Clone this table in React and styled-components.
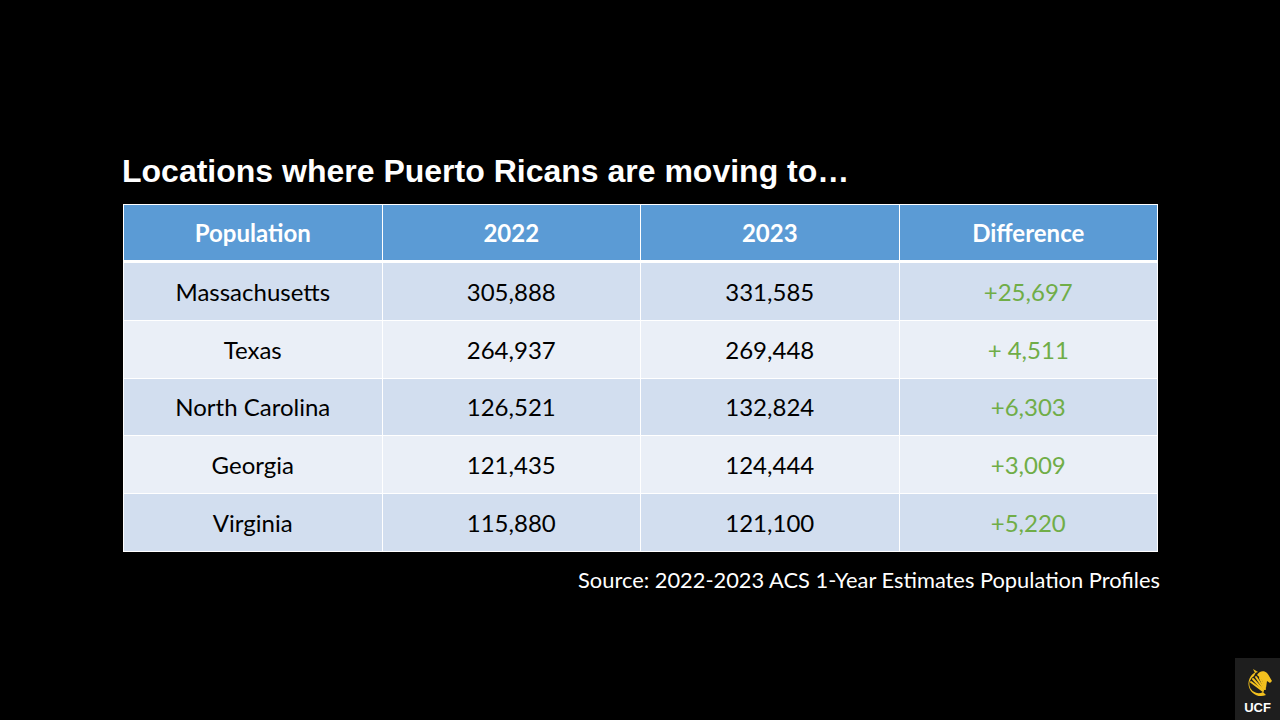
import React from 'react'
import styled, { createGlobalStyle } from 'styled-components'

const rows = [
  { name: 'Massachusetts', y22: '305,888', y23: '331,585', diff: '+25,697' },
  { name: 'Texas', y22: '264,937', y23: '269,448', diff: '+ 4,511' },
  { name: 'North Carolina', y22: '126,521', y23: '132,824', diff: '+6,303' },
  { name: 'Georgia', y22: '121,435', y23: '124,444', diff: '+3,009' },
  { name: 'Virginia', y22: '115,880', y23: '121,100', diff: '+5,220' },
]

const Global = createGlobalStyle`
  html, body {
    margin: 0;
    background: #000;
  }
`

const Pegasus = () => (
  <svg width="30" height="30" viewBox="0 0 30 30">
    <path d="M13 3 A12 12 0 1 0 23 26 L20 23 A8 8 0 1 1 11 7 Z" fill="#f2c01e" />
    <g stroke="#f2c01e" strokeWidth="2" strokeLinecap="round">
      <path d="M20 22 L8 13" />
      <path d="M20 21 L10 10" />
      <path d="M21 20 L13 8" />
      <path d="M22 20 L17 9" />
    </g>
    <path d="M14 6 C16 2 21 1 24 4 C26 6 27 9 29 12 L27 14 L24 12 L23 19 L20 18 C21 14 19 10 14 6 Z" fill="#f2c01e" />
    <path d="M12 4 L10 0 L15 3 Z" fill="#f2c01e" />
  </svg>
)

export default () => (
  <>
    <Global />
    <Slide>
      <Content>
        <Title>Locations where Puerto Ricans are moving to…</Title>
        <Table>
          <thead>
            <tr>
              <Th>Population</Th>
              <Th>2022</Th>
              <Th>2023</Th>
              <Th>Difference</Th>
            </tr>
          </thead>
          <tbody>
            { rows.map((r, i) => (
              <Row key={r.name} odd={i % 2 === 0}>
                <Td>{r.name}</Td>
                <Td>{r.y22}</Td>
                <Td>{r.y23}</Td>
                <Td green>{r.diff}</Td>
              </Row>
            ))}
          </tbody>
        </Table>
        <Source>Source: 2022-2023 ACS 1-Year Estimates Population Profiles</Source>
      </Content>
      <Logo>
        <Pegasus />
        <LogoText>UCF</LogoText>
      </Logo>
    </Slide>
  </>
)

const Slide = styled.div`
  position: relative;
  width: 1280px;
  height: 720px;
  background: #000;
  overflow: hidden;
`
const Content = styled.div`
  display: flex;
  flex-direction: column;
  padding: 152px 0 0 122px;
  width: 1038px;
`
const Title = styled.div`
  font-family: "Liberation Sans", Arial, sans-serif;
  font-weight: 700;
  font-size: 32px;
  color: #fff;
  line-height: 38px;
  margin-bottom: 14px;
`
const Table = styled.table`
  width: 1035px;
  margin-left: 1px;
  border-collapse: collapse;
  table-layout: fixed;
  font-family: Lato, "Open Sans", sans-serif;
`
const Th = styled.th`
  height: 55px;
  padding: 0;
  background: #5b9bd5;
  color: #fff;
  font-weight: 700;
  font-size: 24px;
  text-align: center;
  border-left: 1px solid #fff;
  border-right: 1px solid #fff;
  border-top: 1px solid #fff;
  border-bottom: 3px solid #fff;
`
const Row = styled.tr`
  background: ${p => p.odd ? '#d2deef' : '#eaeff7'};
`
const Td = styled.td`
  height: 56.8px;
  padding: 0;
  text-align: center;
  font-size: 24px;
  color: ${p => p.green ? '#70ad47' : '#000'};
  border: 1px solid #fff;
`
const Source = styled.div`
  align-self: flex-end;
  margin-top: 14px;
  margin-right: 0;
  font-family: Lato, "Open Sans", sans-serif;
  font-size: 21.85px;
  color: #fff;
`
const Logo = styled.div`
  position: absolute;
  right: 0;
  bottom: 0;
  width: 45px;
  height: 62px;
  background: #1e1e1e;
  display: flex;
  flex-direction: column;
  align-items: center;
  justify-content: flex-end;
  padding-bottom: 5px;
  box-sizing: border-box;
`
const LogoText = styled.div`
  font-family: "Liberation Sans", Arial, sans-serif;
  font-weight: 700;
  font-size: 13px;
  color: #fff;
  margin-top: 1px;
`
